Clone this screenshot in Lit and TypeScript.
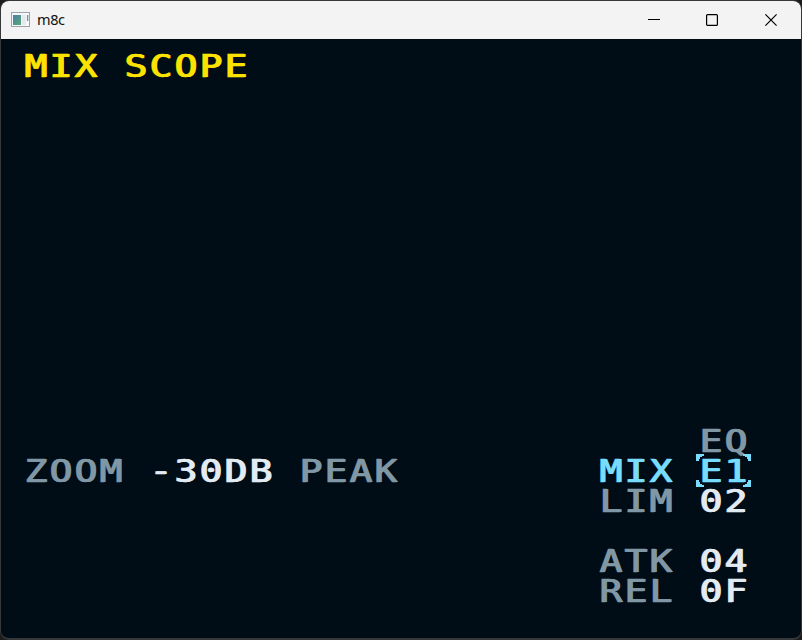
import { LitElement, html, css, svg } from "lit";
import { customElement, property } from "lit/decorators.js";

@customElement("pixel-text")
class PixelText extends LitElement {
  @property() text = "";
  static styles = css`
    :host { display: block; height: 30px; white-space: pre; }
    .t {
      display: inline-block;
      font: 31.5px/30px "DejaVu Sans Mono", monospace;
      letter-spacing: 1.87px;
      transform: scaleX(1.2);
      transform-origin: 0 0;
      -webkit-text-stroke: 0.3px currentColor;
      text-shadow: 0.6px 0 currentColor, 1.2px 0 currentColor;
    }
  `;
  render() {
    return html`<span class="t">${this.text}</span>`;
  }
}

@customElement("title-bar")
class TitleBar extends LitElement {
  static styles = css`
    :host {
      display: flex; align-items: center; height: 38px; box-sizing: border-box;
      background: #f3f3f3; color: #111; padding: 0 1px 2px 10px;
      font: 14.5px/20px "Noto Sans", sans-serif;
    }
    .name { margin-left: 7px; flex: 1; letter-spacing: -0.4px; }
    .btn { width: 58.5px; display: flex; justify-content: center; padding-top: 2px; }
    .btn svg { display: block; }
  `;
  render() {
    return html`
      <svg width="19" height="15" viewBox="0 0 19 15">
        <defs>
          <linearGradient id="g" x1="0" y1="0" x2="1" y2="1">
            <stop offset="0" stop-color="#4b7fa8" /><stop offset="1" stop-color="#58a876" />
          </linearGradient>
        </defs>
        <rect x=".5" y=".5" width="18" height="14" fill="#f7f8f9" stroke="#9ba3ab" />
        <rect x="2" y="3" width="8" height="10" fill="url(#g)" />
        <rect x="11" y="3" width="4" height="10" fill="#e7eaed" />
        <rect x="16" y="3" width="1.3" height="6" fill="#6499a5" />
      </svg>
      <span class="name">m8c</span>
      <div class="btn"><svg width="12" height="12"><path d="M0 5.5H12" stroke="#000" /></svg></div>
      <div class="btn"><svg width="12" height="12"><rect x=".6" y=".6" width="10.8" height="10.8" rx="1" fill="none" stroke="#000" stroke-width="1.2" /></svg></div>
      <div class="btn"><svg width="12" height="12"><path d="M.4 .4L11.6 11.6M11.6 .4L.4 11.6" stroke="#000" stroke-width="1.2" /></svg></div>
    `;
  }
}

@customElement("app-root")
class AppRoot extends LitElement {
  static styles = css`
    :host { display: block; width: 802px; height: 640px; background: #1c1c1c; overflow: hidden; }
    .window {
      box-sizing: border-box; width: 802px; height: 640px; border: 1px solid #363738;
      border-bottom-width: 2px; border-radius: 9px; overflow: hidden; background: #000c16;
      display: flex; flex-direction: column;
    }
    .screen {
      flex: 1; display: grid; padding: 12px 0 0 23px;
      grid-template-columns: 125px 150px 300px 100px 75px;
      grid-template-rows: 375px 30px 30px 60px 30px 30px;
      align-content: start;
    }
    .title { grid-area: 1 / 1 / 2 / 4; color: #fbe200; }
    .dim { color: #8097a5; }
    .value { color: #e2eaf2; }
    .active { color: #78dcfc; }
    .c1 { grid-column: 1; } .c2 { grid-column: 2; } .c3 { grid-column: 3; }
    .c4 { grid-column: 4; } .c5 { grid-column: 5; }
    .r2 { grid-row: 2; } .r3 { grid-row: 3; } .r4 { grid-row: 4; }
    .r5 { grid-row: 5; } .r6 { grid-row: 6; }
    .field { position: relative; }
    .cursor { position: absolute; left: -3px; top: -2px; }
  `;
  render() {
    const corner = (t: string) => svg`<path transform=${t} d="M0 0H8V2H6V3H4V5H3V7H0Z" />`;
    return html`
      <div class="window">
        <title-bar></title-bar>
        <div class="screen">
          <pixel-text class="title" text="MIX SCOPE"></pixel-text>
          <pixel-text class="c5 r2 dim" text="EQ"></pixel-text>
          <pixel-text class="c1 r3 dim" text="ZOOM"></pixel-text>
          <pixel-text class="c2 r3 value" text="-30DB"></pixel-text>
          <pixel-text class="c3 r3 dim" text="PEAK"></pixel-text>
          <pixel-text class="c4 r3 active" text="MIX"></pixel-text>
          <div class="c5 r3 field active">
            <pixel-text text="E1"></pixel-text>
            <svg class="cursor" width="55" height="33" fill="currentColor">
              ${corner("")}${corner("translate(55 0) scale(-1 1)")}
              ${corner("translate(0 33) scale(1 -1)")}${corner("translate(55 33) scale(-1 -1)")}
            </svg>
          </div>
          <pixel-text class="c4 r4 dim" text="LIM"></pixel-text>
          <pixel-text class="c5 r4 value" text="02"></pixel-text>
          <pixel-text class="c4 r5 dim" text="ATK"></pixel-text>
          <pixel-text class="c5 r5 value" text="04"></pixel-text>
          <pixel-text class="c4 r6 dim" text="REL"></pixel-text>
          <pixel-text class="c5 r6 value" text="0F"></pixel-text>
        </div>
      </div>
    `;
  }
}
